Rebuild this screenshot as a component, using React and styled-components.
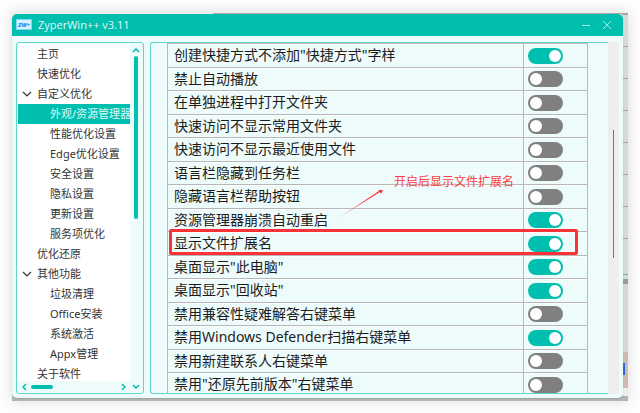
import React from "react";
import styled, { createGlobalStyle } from "styled-components";

const TEAL = "#00bfae";
const MIST = "#eefbfb";

const GlobalStyle = createGlobalStyle`
  * { box-sizing: border-box; }
  body {
    margin: 0;
    background: #fefefe;
    font-family: "Noto Sans", "Noto Sans CJK SC", sans-serif;
  }
  button { font: inherit; border: 0; background: none; padding: 0; margin: 0; }
`;

const Page = styled.div`
  display: flex;
  height: 100vh;
  min-height: 300px;
  padding: 12px;
`;

const Desktop = styled.div`
  flex: 1;
  display: flex;
  min-width: 0;
  padding: 2px 5px 3px 0;
  box-shadow: 0 0 14px rgba(0, 0, 0, 0.14);
  background:
    linear-gradient(#2864d8, #2864d8) right 3px top 351px / 2px 12px no-repeat,
    linear-gradient(#cdb9b1, #cdb9b1) right top 340px / 6px 36px no-repeat,
    linear-gradient(#949b9a, #949b9a) right top 267px / 6px 5px no-repeat,
    linear-gradient(#5fb5ab, #5fb5ab) right top 262px / 6px 1px no-repeat,
    linear-gradient(#d6d7d7, #d6d7d7) right top 272px / 6px 68px no-repeat,
    repeating-linear-gradient(transparent 0 2px, #a5a3a3 2px 3px, transparent 3px 32px) right top / 6px 250px no-repeat,
    linear-gradient(#d3dbda, #d3dbda) right top 3px / 6px 264px no-repeat,
    linear-gradient(#b4b5b5, #b4b5b5) left bottom / 100% 5px no-repeat,
    linear-gradient(#a9a7a7, #a9a7a7) right top 1px / 415px 1px no-repeat,
    #eceeee;
`;

const Window = styled.main`
  position: relative;
  flex: 1;
  min-width: 0;
  display: flex;
  flex-direction: column;
  border-radius: 5px;
  overflow: hidden;
  background: ${MIST};
  box-shadow: 0 1px 1px #9da3a2;
`;

const TitleBar = styled.header`
  display: flex;
  align-items: center;
  height: 22px;
  flex: none;
  padding: 0 8px 0 4px;
  gap: 6px;
  background: ${TEAL};
  color: #e2f8f5;
`;

const Title = styled.h1`
  flex: 1;
  margin: 0;
  font-family: "Open Sans", "Noto Sans", sans-serif;
  font-size: 11px;
  font-weight: 400;
  line-height: 22px;
`;

const WindowButton = styled.button`
  display: flex;
  align-items: center;
  justify-content: center;
  width: 16px;
  height: 22px;
  color: #a5ece4;
`;

const WindowControls = styled.div`
  display: flex;
  gap: 5px;
`;

const Body = styled.div`
  flex: 1;
  min-height: 0;
  display: grid;
  grid-template-columns: 128px 1fr;
  gap: 6px;
  padding: 6px 4px 4px;
`;

const Sidebar = styled.aside`
  display: grid;
  grid-template-columns: 1fr 12px;
  grid-template-rows: 1fr 11px;
  min-height: 0;
  padding: 1px;
  border: 1px solid #62d5ca;
  border-radius: 3px;
  background: ${MIST};
`;

const Tree = styled.nav`
  display: flex;
  flex-direction: column;
  min-width: 0;
  min-height: 0;
  overflow: hidden;
  background: #fff;
`;

const TreeItem = styled.button`
  flex: none;
  height: 20px;
  display: flex;
  align-items: center;
  padding-left: ${(p) => (p.$nested ? 32 : 0)}px;
  font-size: 11px;
  line-height: 16px;
  white-space: nowrap;
  text-align: left;
  color: ${(p) => (p.$active ? "#dff8f5" : "#333")};
  background: ${(p) => (p.$active ? TEAL : "transparent")};
`;

const Twisty = styled.span`
  display: flex;
  flex: none;
  width: 19px;
  padding-left: 4px;
`;

const VScroll = styled.div`
  display: flex;
  flex-direction: column;
  align-items: center;
  gap: 3px;
  padding-top: 4px;
  color: ${TEAL};
`;

const HScroll = styled.div`
  display: flex;
  align-items: center;
  gap: 4px;
  padding: 0 4px;
  color: ${TEAL};
`;

const ScrollCorner = styled.div`
  display: flex;
  align-items: center;
  justify-content: center;
  color: ${TEAL};
`;

const Track = styled.div`
  flex: 1;
  width: ${(p) => (p.$vertical ? "4px" : "auto")};
`;

const Thumb = styled.div`
  width: ${(p) => (p.$vertical ? "4px" : "22px")};
  height: ${(p) => (p.$vertical ? "50%" : "4px")};
  border-radius: 2px;
  background: ${TEAL};
`;

const Content = styled.section`
  position: relative;
  display: flex;
  min-width: 0;
  min-height: 0;
`;

const Panel = styled.div`
  flex: 1;
  min-width: 0;
  overflow: hidden;
  padding: 0 20px 0 16px;
  border: 1px solid #62d5ca;
  border-right: 0;
  border-radius: 3px 0 0 3px;
`;

const PageScroll = styled.div`
  width: 11px;
  flex: none;
  display: flex;
  justify-content: center;
  padding-top: 88px;
  background: #eee;
`;

const PageThumb = styled.div`
  width: 1px;
  height: 128px;
  background: #777;
`;

const Options = styled.table`
  width: 100%;
  table-layout: fixed;
  border-spacing: 0;
  border: solid #b7b7b7;
  border-width: 1px 1px 0;
`;

const Row = styled.tr`
  height: 24px;
  &:nth-child(even) { height: 23px; }
`;

const NameCell = styled.td`
  padding: 0 0 1px 6px;
  border-bottom: 1px solid #b7b7b7;
  box-shadow: inset 0 1px #fafefe;
  font-size: 14px;
  line-height: 20px;
  white-space: nowrap;
  color: #1c1c1c;
`;

const SwitchCell = styled.td`
  width: 64px;
  padding: 0 0 0 4px;
  border-left: 1px solid #b7b7b7;
  border-bottom: 1px solid #b7b7b7;
  box-shadow: inset 1px 1px #fafefe;
`;

const Switch = styled.input.attrs({ type: "checkbox" })`
  appearance: none;
  display: flex;
  align-items: center;
  width: 35px;
  height: 16px;
  margin: 0;
  padding: 0 2px;
  border-radius: 8px;
  background: #808080;
  &::before {
    content: "";
    width: 12px;
    height: 12px;
    border-radius: 50%;
    background: #fff;
  }
  &:checked {
    justify-content: flex-end;
    background: ${TEAL};
  }
`;

const Highlight = styled.div`
  position: absolute;
  left: 19px;
  right: 41px;
  top: 187px;
  height: 26px;
  border: 3px solid #fb3338;
  border-radius: 2px;
  pointer-events: none;
`;

const Note = styled.p`
  position: absolute;
  left: 244px;
  top: 131px;
  margin: 0;
  font-size: 12px;
  line-height: 18px;
  white-space: nowrap;
  color: #fb3f42;
  pointer-events: none;
`;

const Arrow = styled.svg`
  position: absolute;
  left: 186px;
  top: 146px;
  pointer-events: none;
`;

const paths = {
  down: "M1 1 L4 4 L7 1",
  up: "M1 4 L4 1 L7 4",
  left: "M4 1 L1 4 L4 7",
  right: "M1 1 L4 4 L1 7",
};

function Chevron({ dir }) {
  const tall = dir === "left" || dir === "right";
  const w = tall ? 5 : 8;
  const h = tall ? 8 : 5;
  return (
    <svg width={w} height={h} viewBox={`0 0 ${w} ${h}`} fill="none" stroke="currentColor" strokeWidth="1.5" aria-hidden="true">
      <path d={paths[dir]} />
    </svg>
  );
}

function TreeChevron() {
  return (
    <svg width="10" height="6" viewBox="0 0 10 6" fill="none" stroke="#333" strokeWidth="1.2" aria-hidden="true">
      <path d="M1 1 L5 5 L9 1" />
    </svg>
  );
}

function Logo() {
  return (
    <svg width="16" height="18" viewBox="0 0 16 18" aria-hidden="true">
      <rect x="0.5" y="3.5" width="15" height="10" fill="#d5f2ff" stroke="#7fd6f8" />
      <path d="M5.5 14 v2 M10.5 14 v2 M4 16.5 h8" stroke="#12a5d0" fill="none" />
      <text x="8" y="11" textAnchor="middle" fontFamily="Noto Sans, sans-serif" fontSize="6" fontWeight="800" fontStyle="italic" fill="#1689e0">ZW+</text>
    </svg>
  );
}

const tree = [
  { label: "主页" },
  { label: "快速优化" },
  { label: "自定义优化", open: true },
  { label: "外观/资源管理器", nested: true, active: true },
  { label: "性能优化设置", nested: true },
  { label: "Edge优化设置", nested: true },
  { label: "安全设置", nested: true },
  { label: "隐私设置", nested: true },
  { label: "更新设置", nested: true },
  { label: "服务项优化", nested: true },
  { label: "优化还原" },
  { label: "其他功能", open: true },
  { label: "垃圾清理", nested: true },
  { label: "Office安装", nested: true },
  { label: "系统激活", nested: true },
  { label: "Appx管理", nested: true },
  { label: "关于软件" },
];

const options = [
  ['创建快捷方式不添加"快捷方式"字样', true],
  ["禁止自动播放", false],
  ["在单独进程中打开文件夹", false],
  ["快速访问不显示常用文件夹", false],
  ["快速访问不显示最近使用文件", false],
  ["语言栏隐藏到任务栏", false],
  ["隐藏语言栏帮助按钮", false],
  ["资源管理器崩溃自动重启", true],
  ["显示文件扩展名", true],
  ['桌面显示"此电脑"', true],
  ['桌面显示"回收站"', true],
  ["禁用兼容性疑难解答右键菜单", false],
  ["禁用Windows Defender扫描右键菜单", true],
  ["禁用新建联系人右键菜单", false],
  ['禁用"还原先前版本"右键菜单', false],
];

export default function App() {
  return (
    <Page>
      <GlobalStyle />
      <Desktop>
        <Window>
          <TitleBar>
            <Logo />
            <Title>ZyperWin++ v3.11</Title>
            <WindowControls>
              <WindowButton aria-label="最小化">
                <svg width="10" height="10" viewBox="0 0 10 10" stroke="currentColor" aria-hidden="true">
                  <path d="M1 5.5 H9" />
                </svg>
              </WindowButton>
              <WindowButton aria-label="关闭">
                <svg width="10" height="10" viewBox="0 0 10 10" stroke="currentColor" aria-hidden="true">
                  <path d="M1 1 L9 9 M9 1 L1 9" />
                </svg>
              </WindowButton>
            </WindowControls>
          </TitleBar>
          <Body>
            <Sidebar>
              <Tree>
                {tree.map((item) => (
                  <TreeItem
                    key={item.label}
                    $nested={item.nested}
                    $active={item.active}
                    aria-current={item.active ? "page" : undefined}
                    aria-expanded={item.open}
                  >
                    {!item.nested && <Twisty>{item.open && <TreeChevron />}</Twisty>}
                    {item.label}
                  </TreeItem>
                ))}
              </Tree>
              <VScroll>
                <Chevron dir="up" />
                <Track $vertical>
                  <Thumb $vertical />
                </Track>
              </VScroll>
              <HScroll>
                <Chevron dir="left" />
                <Track>
                  <Thumb />
                </Track>
                <Chevron dir="right" />
              </HScroll>
              <ScrollCorner>
                <Chevron dir="down" />
              </ScrollCorner>
            </Sidebar>
            <Content>
              <Panel>
                <Options>
                  <colgroup>
                    <col />
                    <col width="64" />
                  </colgroup>
                  <tbody>
                    {options.map(([name, on], i) => (
                      <Row key={name}>
                        <NameCell>
                          <label htmlFor={`option-${i}`}>{name}</label>
                        </NameCell>
                        <SwitchCell>
                          <Switch id={`option-${i}`} defaultChecked={on} />
                        </SwitchCell>
                      </Row>
                    ))}
                  </tbody>
                </Options>
              </Panel>
              <PageScroll>
                <PageThumb />
              </PageScroll>
              <Highlight />
              <Note>开启后显示文件扩展名</Note>
              <Arrow width="50" height="34" viewBox="0 0 50 34" aria-hidden="true">
                <defs>
                  <linearGradient id="fade" x1="0" y1="1" x2="1" y2="0">
                    <stop offset="0" stopColor="#fb3338" stopOpacity="0.3" />
                    <stop offset="0.6" stopColor="#fb3338" />
                  </linearGradient>
                </defs>
                <path d="M1 31 L43 3 L42 2 L47 2 L45 6 L44 4 Z" fill="url(#fade)" />
              </Arrow>
            </Content>
          </Body>
        </Window>
      </Desktop>
    </Page>
  );
}
